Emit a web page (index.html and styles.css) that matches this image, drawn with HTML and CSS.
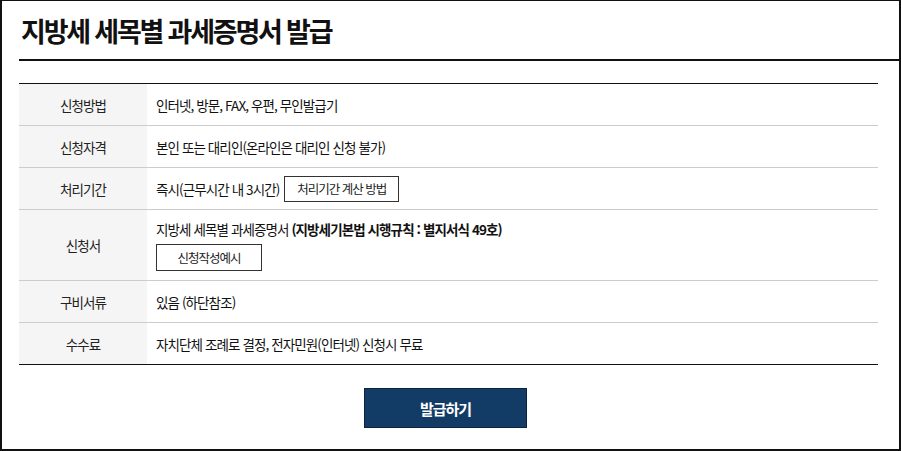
FILE: index.html
```html
<!DOCTYPE html>
<html lang="ko">
<head>
    <meta charset="UTF-8">
    <meta name="viewport" content="width=device-width, initial-scale=1.0">
    <title>지방세 세목별 과세증명서 발급</title>
    <link rel="stylesheet" href="styles.css">
</head>
<body>
    <div class="page">
        <div class="pageHead">
            <h1>지방세 세목별 과세증명서 발급</h1>
        </div>

        <div class="content">
            <table class="infoTable">
                <tr>
                    <th>신청방법</th>
                    <td>인터넷, 방문, FAX, 우편, 무인발급기</td>
                </tr>
                <tr>
                    <th>신청자격</th>
                    <td>본인 또는 대리인(온라인은 대리인 신청 불가)</td>
                </tr>
                <tr>
                    <th>처리기간</th>
                    <td>즉시(근무시간 내 3시간) <button class="lineBtn">처리기간 계산 방법</button></td>
                </tr>
                <tr class="tall">
                    <th>신청서</th>
                    <td>
                        <p>지방세 세목별 과세증명서 <b>(지방세기본법 시행규칙 : 별지서식 49호)</b></p>
                        <button class="lineBtn wide">신청작성예시</button>
                    </td>
                </tr>
                <tr>
                    <th>구비서류</th>
                    <td>있음 (하단참조)</td>
                </tr>
                <tr>
                    <th>수수료</th>
                    <td>자치단체 조례로 결정, 전자민원(인터넷) 신청시 무료</td>
                </tr>
            </table>

            <div class="btnArea">
                <button class="issueBtn">발급하기</button>
            </div>
        </div>
    </div>
</body>
</html>
```

FILE: styles.css
```css
html, body {
    margin: 0;
    height: 100%;
}

body {
    font-family: "Noto Sans CJK KR", "Noto Sans", sans-serif;
    color: #222;
    background: #fff;
}

.page {
    box-sizing: border-box;
    height: 100%;
    border-style: solid;
    border-color: #111;
    border-width: 1px 2px 2px 2px;
}

.pageHead {
    margin-left: 17px;
    border-bottom: 2px solid #111;
    height: 58px;
}

.pageHead h1 {
    margin: 0;
    padding: 12px 0 0 2px;
    font-size: 27px;
    font-weight: 700;
    letter-spacing: -2.2px;
    line-height: 36px;
    color: #111;
}

.content {
    padding: 22px 21px 0 17px;
}

.infoTable {
    width: 100%;
    border-collapse: collapse;
    border-top: 1px solid #111;
    border-bottom: 1px solid #111;
    font-size: 13.5px;
    letter-spacing: -0.9px;
}

.infoTable th,
.infoTable td {
    height: 41px;
    padding: 0 9px;
    border-top: 1px solid #ccc;
    vertical-align: middle;
}

.infoTable tr:first-child th,
.infoTable tr:first-child td {
    border-top: 1px solid #111;
}

.infoTable th {
    width: 110px;
    background: #f5f5f5;
    font-weight: 400;
    color: #222;
    text-align: center;
}

.infoTable td {
    color: #111;
}

.infoTable tr.tall td,
.infoTable tr.tall th {
    height: 70px;
}

.infoTable td p {
    margin: 0 0 5px;
}

.infoTable td b {
    font-weight: 700;
}

.lineBtn {
    height: 26px;
    margin-left: 2px;
    padding: 0 12px;
    border: 1px solid #333;
    background: #fff;
    font-family: inherit;
    font-size: 12.5px;
    letter-spacing: -1px;
    color: #222;
}

.lineBtn.wide {
    width: 106px;
    height: 27px;
    margin-left: 0;
}

.btnArea {
    display: flex;
    justify-content: center;
    padding-top: 23px;
}

.issueBtn {
    width: 163px;
    height: 40px;
    margin-right: 6px;
    border: 1px solid #0a2440;
    background: #123c66;
    color: #fff;
    font-family: inherit;
    font-size: 15px;
    font-weight: 700;
    letter-spacing: -1px;
}
```
